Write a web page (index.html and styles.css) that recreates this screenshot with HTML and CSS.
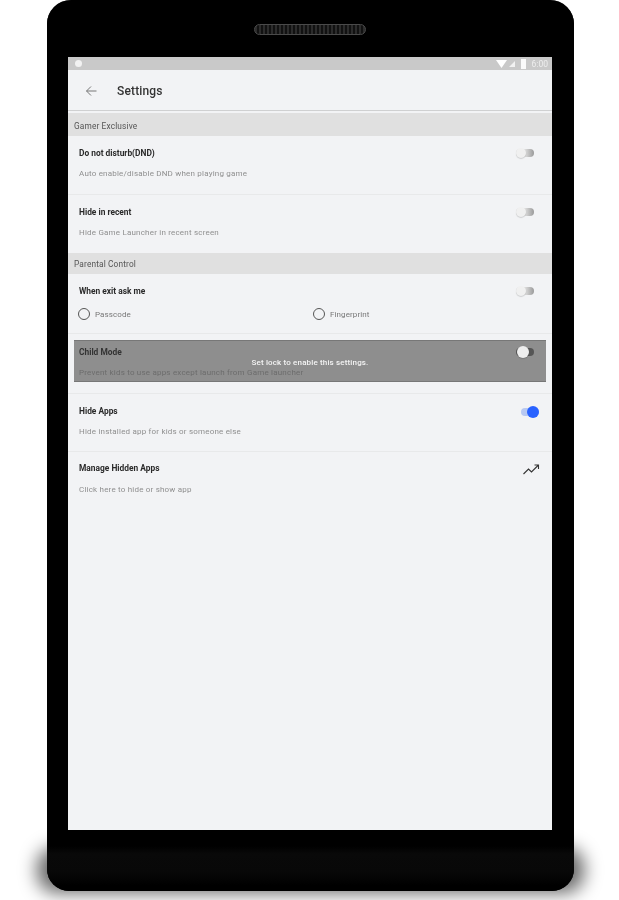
FILE: index.html
```html
<!DOCTYPE html>
<html lang="en">
<head>
    <meta charset="UTF-8">
    <meta name="viewport" content="width=device-width, initial-scale=1.0">
    <title>Settings</title>
    <link rel="stylesheet" href="styles.css">
</head>
<body>
    <div class="device">
        <div class="speaker"></div>
        <div class="screen">
            <div class="status-bar">
                <span class="status-dot"></span>
                <div class="status-icons">
                    <svg width="11" height="8" viewBox="0 0 11 8"><path d="M0 0h11L5.5 8z" fill="#fff"/></svg>
                    <svg width="6" height="6" viewBox="0 0 7 7"><path d="M0 7L7 0v7z" fill="#f2f2f2"/></svg>
                    <span class="battery"></span>
                    <span class="status-time">6:00</span>
                </div>
            </div>
            <div class="toolbar">
                <svg class="back" width="12" height="12" viewBox="0 0 12 12"><path d="M11.5 6H1.5M6 1.5L1.5 6L6 10.5" fill="none" stroke="#777" stroke-width="1"/></svg>
                <span class="toolbar-title">Settings</span>
            </div>

            <div class="section">Gamer Exclusive</div>
            <div class="row">
                <div class="row-text">
                    <div class="row-title">Do not disturb(DND)</div>
                    <div class="row-sub">Auto enable/disable DND when playing game</div>
                </div>
                <span class="switch"></span>
            </div>
            <div class="row row-last">
                <div class="row-text">
                    <div class="row-title">Hide in recent</div>
                    <div class="row-sub">Hide Game Launcher in recent screen</div>
                </div>
                <span class="switch"></span>
            </div>

            <div class="section section-second">Parental Control</div>
            <div class="row row-radio">
                <div class="row-text">
                    <div class="row-title">When exit ask me</div>
                    <div class="radios">
                        <label class="radio"><span class="radio-circle"></span>Passcode</label>
                        <label class="radio"><span class="radio-circle"></span>Fingerprint</label>
                    </div>
                </div>
                <span class="switch"></span>
            </div>
            <div class="row row-locked">
                <div class="row-text">
                    <div class="row-title">Child Mode</div>
                    <div class="row-sub">Prevent kids to use apps except launch from Game launcher</div>
                </div>
                <span class="switch"></span>
                <div class="lock-overlay">Set lock to enable this settings.</div>
            </div>
            <div class="row row-on">
                <div class="row-text">
                    <div class="row-title">Hide Apps</div>
                    <div class="row-sub">Hide installed app for kids or someone else</div>
                </div>
                <span class="switch switch-on"></span>
            </div>
            <div class="row row-last row-manage">
                <div class="row-text">
                    <div class="row-title">Manage Hidden Apps</div>
                    <div class="row-sub">Click here to hide or show app</div>
                </div>
                <svg class="trend" width="17" height="11" viewBox="0 0 17 11"><path d="M0.5 10L5.5 5L8.5 8L15.5 1M11.5 1H15.5V5" fill="none" stroke="#333" stroke-width="1.1"/></svg>
            </div>
        </div>
    </div>
</body>
</html>
```

FILE: styles.css
```css
html, body {
    margin: 0;
    height: 900px;
    overflow: hidden;
    background: #fff;
    font-family: Roboto, "Liberation Sans", sans-serif;
}

.device {
    position: relative;
    z-index: 0;
    box-sizing: border-box;
    width: 527px;
    height: 891px;
    margin-left: 47px;
    padding: 22px 22px 0 21px;
    background: linear-gradient(#000 846px, #090909 854px, #080808 872px, #000 886px);
    border-top: 2px solid #5a5a5a;
    border-radius: 24px 24px 22px 22px;
}

/* soft shadow below the device */
.device::before {
    content: "";
    position: absolute;
    z-index: -1;
    left: -10px;
    right: -10px;
    top: 845px;
    bottom: -2px;
    background: rgba(0,0,0,0.6);
    border-radius: 20px;
    filter: blur(9px);
}

.device::after {
    content: "";
    position: absolute;
    z-index: -1;
    inset: -2px 0 0;
    background: inherit;
    border-radius: inherit;
}

.speaker {
    box-sizing: border-box;
    width: 112px;
    height: 11px;
    margin: 0 auto 22px;
    background: repeating-linear-gradient(90deg, #2c2c2c 0 2px, #111 2px 4px);
    border: 1px solid #4a4a4a;
    border-radius: 6px;
}

.screen {
    height: 773px;
    background: #f2f3f5;
    overflow: hidden;
}

.status-bar {
    height: 13px;
    padding: 0 4px 0 7px;
    background: #c9c9c9;
    display: flex;
    align-items: center;
    justify-content: space-between;
}

.status-dot {
    width: 7px;
    height: 7px;
    background: #f2f2f2;
    border-radius: 50%;
}

.status-icons {
    display: flex;
    align-items: center;
    gap: 2px;
}

.battery {
    width: 5px;
    height: 10px;
    margin: 0 4px;
    background: #fafafa;
}

.status-time {
    font-size: 8.5px;
    color: #eee;
    filter: blur(0.5px);
}

.toolbar {
    box-sizing: border-box;
    height: 41px;
    padding-top: 2px;
    border-bottom: 1px solid #cfd0d1;
    margin-bottom: 2px;
    display: flex;
    align-items: center;
}

.back {
    margin-left: 17px;
}

.toolbar-title {
    margin-left: 20px;
    font-size: 12px;
    font-weight: 500;
    letter-spacing: 0.15px;
    color: #333;
    filter: blur(0.4px);
}

.section {
    height: 23px;
    line-height: 26px;
    padding-left: 6px;
    background: #e0e0e0;
    font-size: 8.3px;
    letter-spacing: 0.15px;
    color: #555;
    filter: blur(0.4px);
}

.section-second {
    height: 21px;
    line-height: 22px;
}

.row {
    position: relative;
    box-sizing: border-box;
    height: 59px;
    padding: 0 18px 0 11px;
    border-bottom: 1px solid #e8e9ea;
    display: flex;
    justify-content: space-between;
}

.row-last {
    height: 58px;
    border-bottom: none;
}

.row-radio {
    height: 60px;
}

.row-on {
    height: 58px;
}

.row-text {
    flex: 1;
    padding-top: 12px;
    filter: blur(0.4px);
}

.row-manage .row-text {
    padding-top: 11px;
}

.row-manage .row-sub {
    margin-top: 12px;
}

.row-title {
    height: 10px;
    line-height: 10px;
    font-size: 8.4px;
    font-weight: 700;
    color: #2a2a2a;
}

.row-sub {
    margin-top: 11px;
    line-height: 10px;
    font-size: 8px;
    letter-spacing: 0.2px;
    color: #8f8f8f;
}

.radios {
    margin-top: 12px;
    display: grid;
    grid-template-columns: 235px 1fr;
}

.radio {
    margin-left: -1px;
    display: flex;
    align-items: center;
    gap: 5px;
    font-size: 8px;
    letter-spacing: 0.1px;
    color: #777;
}

.radio-circle {
    box-sizing: border-box;
    width: 12px;
    height: 12px;
    border: 1px solid #555;
    border-radius: 50%;
}

.switch {
    position: relative;
    flex: none;
    width: 18px;
    height: 8px;
    margin-top: 13px;
    background: linear-gradient(90deg, #ddd 50%, #9a9a9a);
    border-radius: 4px;
}

.switch::after {
    content: "";
    position: absolute;
    left: 0;
    top: -1px;
    width: 10px;
    height: 10px;
    background: #f0f0f0;
    border-radius: 50%;
    box-shadow: 0 1px 1px rgba(0,0,0,0.15);
}

.row-on .switch {
    margin: 14px -5px 0 0;
}

.switch-on {
    background: #b7c8f2;
}

.switch-on::after {
    left: 6px;
    top: -2px;
    width: 12px;
    height: 12px;
    background: #2962ff;
    box-shadow: none;
}

.trend {
    margin: 12px -6px 0 0;
}

.row-locked {
    height: 60px;
}

.row-locked .row-text {
    position: relative;
    z-index: 1;
    padding-top: 13px;
}

.row-locked .row-title {
    color: #333;
}

.row-locked .row-sub {
    color: #6c6c6c;
}

.row-locked .switch {
    z-index: 2;
    margin-top: 14px;
    background: #555;
}

.row-locked .switch::after {
    left: 1px;
    top: -2px;
    width: 12px;
    height: 12px;
    background: #eee;
}

.lock-overlay {
    position: absolute;
    left: 6px;
    right: 6px;
    top: 6px;
    height: 42px;
    line-height: 43px;
    background: #8e8e8e;
    border-top: 1px solid #777;
    border-bottom: 1px solid #777;
    box-sizing: border-box;
    text-align: center;
    font-size: 8px;
    font-weight: 500;
    letter-spacing: 0.15px;
    color: #f4f4f4;
    filter: blur(0.35px);
}
```
